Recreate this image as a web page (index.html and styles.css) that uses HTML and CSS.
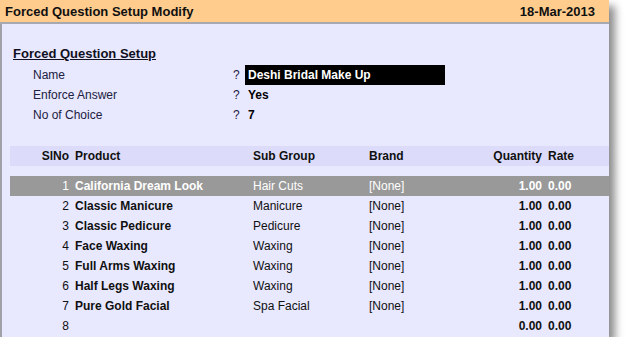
FILE: index.html
```html
<!DOCTYPE html>
<html lang="en">
<head>
    <meta charset="UTF-8">
    <title>Forced Question Setup Modify</title>
    <link rel="stylesheet" href="styles.css">
</head>
<body>
    <div class="window">
        <div class="titlebar">
            <span>Forced Question Setup Modify</span>
            <span>18-Mar-2013</span>
        </div>
        <div class="content">
            <h2 class="section-title">Forced Question Setup</h2>
            <div class="fields">
                <div class="field">
                    <span class="label">Name</span>
                    <span class="q">?</span>
                    <span class="value active">Deshi Bridal Make Up</span>
                </div>
                <div class="field">
                    <span class="label">Enforce Answer</span>
                    <span class="q">?</span>
                    <span class="value">Yes</span>
                </div>
                <div class="field">
                    <span class="label">No of Choice</span>
                    <span class="q">?</span>
                    <span class="value">7</span>
                </div>
            </div>

            <div class="table">
                <div class="row head">
                    <span class="sl">SlNo</span>
                    <span>Product</span>
                    <span>Sub Group</span>
                    <span>Brand</span>
                    <span class="num">Quantity</span>
                    <span class="rate">Rate</span>
                </div>
                <div class="rows">
                    <div class="row selected">
                        <span class="sl">1</span>
                        <span class="prod">California Dream Look</span>
                        <span>Hair Cuts</span>
                        <span>[None]</span>
                        <span class="num">1.00</span>
                        <span class="rate">0.00</span>
                    </div>
                    <div class="row">
                        <span class="sl">2</span>
                        <span class="prod">Classic Manicure</span>
                        <span>Manicure</span>
                        <span>[None]</span>
                        <span class="num">1.00</span>
                        <span class="rate">0.00</span>
                    </div>
                    <div class="row">
                        <span class="sl">3</span>
                        <span class="prod">Classic Pedicure</span>
                        <span>Pedicure</span>
                        <span>[None]</span>
                        <span class="num">1.00</span>
                        <span class="rate">0.00</span>
                    </div>
                    <div class="row">
                        <span class="sl">4</span>
                        <span class="prod">Face Waxing</span>
                        <span>Waxing</span>
                        <span>[None]</span>
                        <span class="num">1.00</span>
                        <span class="rate">0.00</span>
                    </div>
                    <div class="row">
                        <span class="sl">5</span>
                        <span class="prod">Full Arms Waxing</span>
                        <span>Waxing</span>
                        <span>[None]</span>
                        <span class="num">1.00</span>
                        <span class="rate">0.00</span>
                    </div>
                    <div class="row">
                        <span class="sl">6</span>
                        <span class="prod">Half Legs Waxing</span>
                        <span>Waxing</span>
                        <span>[None]</span>
                        <span class="num">1.00</span>
                        <span class="rate">0.00</span>
                    </div>
                    <div class="row">
                        <span class="sl">7</span>
                        <span class="prod">Pure Gold Facial</span>
                        <span>Spa Facial</span>
                        <span>[None]</span>
                        <span class="num">1.00</span>
                        <span class="rate">0.00</span>
                    </div>
                    <div class="row">
                        <span class="sl">8</span>
                        <span class="prod"></span>
                        <span></span>
                        <span></span>
                        <span class="num">0.00</span>
                        <span class="rate">0.00</span>
                    </div>
                </div>
            </div>
        </div>
    </div>
</body>
</html>
```

FILE: styles.css
```css
body {
    margin: 0;
    background: white;
    font-family: "Liberation Sans", Arial, sans-serif;
    font-size: 12px;
    color: #000;
}
.window {
    width: 609px;
    box-shadow: 6px 6px 8px rgba(0, 0, 0, 0.45);
}
.titlebar {
    height: 22px;
    background: #ffcc8e;
    border-bottom: 2px solid #a8a8b0;
    display: flex;
    justify-content: space-between;
    align-items: center;
    padding: 0 14px 0 5px;
    font-size: 13px;
    font-weight: bold;
    color: #101010;
}
.content {
    box-sizing: border-box;
    background: #e8e8ff;
    border-left: 2px solid #a0a0a8;
    height: 313px;
    padding-top: 20px;
}
.section-title {
    margin: 0 0 0 11px;
    font-size: 13px;
    font-weight: bold;
    text-decoration: underline;
    color: #101020;
    line-height: 20px;
}
.fields {
    margin-top: 1px;
}
.field {
    display: flex;
    align-items: center;
    height: 20px;
    color: #202040;
}
.field .label {
    width: 200px;
    padding-left: 31px;
}
.field .q {
    width: 12px;
}
.field .value {
    font-weight: bold;
    color: #000;
    padding: 0 3px;
    line-height: 20px;
}
.field .value.active {
    background: #000;
    color: #fff;
    width: 194px;
}
.table {
    margin-top: 21px;
    margin-left: 8px;
}
.row {
    display: grid;
    grid-template-columns: 65px 178px 116px 93px 80px 1fr;
    align-items: center;
    height: 20px;
    color: #101010;
}
.row .sl {
    text-align: right;
    padding-right: 6px;
}
.row .num {
    text-align: right;
    font-weight: bold;
}
.row .rate {
    padding-left: 6px;
    font-weight: bold;
}
.row .prod {
    font-weight: bold;
}
.head {
    background: #dcdcfa;
    font-weight: bold;
}
.rows {
    margin-top: 10px;
}
.selected {
    background: #999999;
    color: #fff;
}
```
